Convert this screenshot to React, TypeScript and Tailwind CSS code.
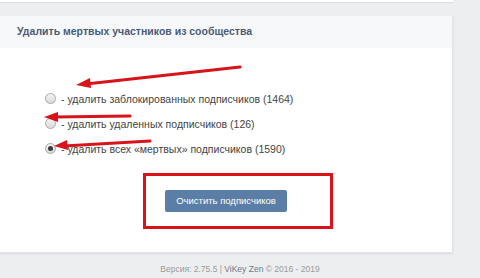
import React from 'react';

const options = [
  { label: '- удалить заблокированных подписчиков (1464)', checked: false },
  { label: '- удалить удаленных подписчиков (126)', checked: false },
  { label: '- удалить всех «мертвых» подписчиков (1590)', checked: true },
];

const Radio: React.FC<{ checked: boolean }> = ({ checked }) => (
  <span className="flex h-[11px] w-[11px] shrink-0 items-center justify-center rounded-full border border-[#a9a9a9] bg-gradient-to-b from-[#f4f4f4] to-[#d9d9d9]">
    {checked && <span className="h-[5px] w-[5px] rounded-full bg-[#3a3a3a]" />}
  </span>
);

export default function App() {
  return (
    <div
      className="relative h-[278px] w-[480px] overflow-hidden bg-[#edeef0]"
      style={{ fontFamily: '"Liberation Sans", Arial, sans-serif' }}
    >
      {/* previous card edge */}
      <div className="h-[2px] w-[453px] bg-white shadow-[0_1px_1px_#dcdde1]" />

      {/* main card */}
      <div className="mt-[14px] w-[453px] border-r border-b border-[#e2e3e7] bg-white shadow-[0_1px_2px_#d7d8db]">
        <div className="flex h-[32px] items-center bg-[#f7f8fa] pl-[17px] text-[10.5px] font-bold text-[#4a5c75]">
          Удалить мертвых участников из сообщества
        </div>

        <div className="h-[204px] pt-[44px]">
          <div className="flex flex-col gap-[13px] pl-[45px]">
            {options.map((o) => (
              <div key={o.label} className="flex h-[12px] items-center gap-[5px] text-[10.5px] text-[#444]">
                <Radio checked={o.checked} />
                <span className="mt-[3px]">{o.label}</span>
              </div>
            ))}
          </div>

          <div className="ml-[143px] mt-[19px] flex h-[56px] w-[190px] items-center border-[3px] border-[#d8141a] pl-[19px]">
            <button className="h-[22px] w-[122px] rounded-[2px] bg-[#5b7ea6] text-[9.5px] text-white">
              Очистить подписчиков
            </button>
          </div>
        </div>
      </div>

      {/* footer */}
      <div className="mt-[10px] w-[480px] text-center text-[8.5px] text-[#9a9a9a]">
        Версия: 2.75.5 | <span className="text-[#6b7a8c]">ViKey Zen</span> © 2016 - 2019
      </div>

      {/* annotation arrows */}
      <svg className="pointer-events-none absolute left-0 top-0" width="480" height="278">
        <g stroke="#d8141a" strokeWidth="3" strokeLinecap="round" fill="#d8141a">
          <line x1="240" y1="67" x2="86" y2="84" />
          <line x1="130" y1="116" x2="54" y2="117" />
          <line x1="150" y1="141" x2="64" y2="146" />
        </g>
        <g fill="#d8141a">
          <polygon points="76,85 90,78 91,88" />
          <polygon points="44,117 58,112 58,122" />
          <polygon points="54,146 67,140 68,150" />
        </g>
      </svg>
    </div>
  );
}
